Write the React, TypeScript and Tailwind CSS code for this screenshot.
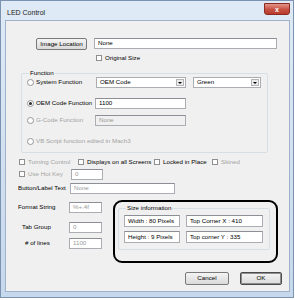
import React from 'react';

const Check = ({ label, disabled, className = '' }: { label: string; disabled?: boolean; className?: string }) => (
    <div className={`flex items-center ${className}`}>
        <span className="w-[6px] h-[6px] border border-[#8f8f8f] bg-white shrink-0" />
        <span className={`ml-[3px] whitespace-nowrap ${disabled ? 'text-[#a3a3a3]' : 'text-black'}`}>{label}</span>
    </div>
);

const Radio = ({ label, checked, disabled, width }: { label: string; checked?: boolean; disabled?: boolean; width?: string }) => (
    <div className={`flex items-center ${width ?? ''}`}>
        <span className="w-[7px] h-[7px] rounded-full border border-[#959595] bg-white flex items-center justify-center shrink-0">
            {checked && <span className="w-[3px] h-[3px] rounded-full bg-[#2b2b2b]" />}
        </span>
        <span className={`ml-[2px] whitespace-nowrap ${disabled ? 'text-[#a3a3a3]' : 'text-black'}`}>{label}</span>
    </div>
);

const Field = ({ value, className = '', muted, disabled }: { value: string; className?: string; muted?: boolean; disabled?: boolean }) => (
    <div
        className={`flex items-center pl-[3px] border border-[#abadb3] border-t-[#8c8f96] ${disabled ? 'bg-[#f0f0f0]' : 'bg-white'} ${muted || disabled ? 'text-[#9a9a9a]' : 'text-black'} ${className}`}
    >
        {value}
    </div>
);

const Combo = ({ value, className = '' }: { value: string; className?: string }) => (
    <div className={`flex items-center justify-between bg-white border border-[#abadb3] h-[11px] pl-[3px] pr-[1px] ${className}`}>
        <span>{value}</span>
        <span className="w-[8px] h-[7px] bg-[#ececec] border border-[#b5b5b5] flex items-center justify-center">
            <span className="w-0 h-0 border-l-[2px] border-r-[2px] border-t-[2px] border-l-transparent border-r-transparent border-t-black" />
        </span>
    </div>
);

const Btn = ({ label, className = '', focused }: { label: string; className?: string; focused?: boolean }) => (
    <div
        className={`flex items-center justify-center rounded-[2px] bg-gradient-to-b from-[#f4f4f4] to-[#dadada] ${focused ? 'border border-[#4b4b4b] ring-1 ring-inset ring-[#8d8d8d]' : 'border border-[#7a7a7a]'} ${className}`}
    >
        {label}
    </div>
);

export default function App() {
    return (
        <div className="w-[295px] h-[300px] bg-white font-['Liberation_Sans',Arial,sans-serif] text-[6.2px] leading-none text-black">
            <div className="w-[294px] h-[298px] border border-[#7b93b0] bg-gradient-to-b from-[#dfeaf6] to-[#c6d8ec] flex flex-col">
                {/* title bar */}
                <div className="h-[19px] flex items-start justify-between">
                    <span className="ml-[6px] mt-[8px] text-[7px] text-[#1a1a1a]">LED Control</span>
                    <div className="mt-[2px] mr-[3px] w-[26px] h-[12px] rounded-b-[3px] border border-[#8a2a22] bg-gradient-to-b from-[#e0958a] via-[#c95546] to-[#b83a2a] flex items-center justify-center">
                        <span className="text-white text-[7px] font-bold leading-none">x</span>
                    </div>
                </div>

                {/* client area */}
                <div className="ml-[4px] w-[285px] h-[272px] border border-[#9fb2c9] bg-[#f0f0f0] flex flex-col">
                    <div className="mt-[17px] ml-[30px] flex items-start">
                        <Btn label="Image Location" className="w-[51px] h-[12px]" />
                        <Field value="None" className="ml-[7px] w-[183px] h-[11px]" />
                    </div>
                    <Check label="Original Size" className="mt-[4px] ml-[90px] h-[8px]" />

                    <fieldset className="mt-[7px] ml-[15px] w-[247px] border border-[#d5dfe5] rounded-[2px] pl-[5px] pb-[7px]">
                        <legend className="ml-[2px] px-[1px] leading-[8px]">Function</legend>
                        <div className="flex items-center h-[11px]">
                            <Radio label="System Function" width="w-[69px]" />
                            <Combo value="OEM Code" className="w-[90px]" />
                            <Combo value="Green" className="ml-[7px] w-[68px]" />
                        </div>
                        <div className="mt-[10px] flex items-center h-[11px]">
                            <Radio label="OEM Code Function" checked width="w-[68px]" />
                            <Field value="1100" className="w-[91px] h-[11px]" />
                        </div>
                        <div className="mt-[6px] flex items-center h-[11px]">
                            <Radio label="G-Code Function" disabled width="w-[68px]" />
                            <Field value="None" disabled className="w-[91px] h-[11px]" />
                        </div>
                        <div className="mt-[11px] flex items-center h-[8px]">
                            <Radio label="VB Script function edited in Mach3" disabled />
                        </div>
                    </fieldset>

                    <div className="mt-[5px] ml-[13px] h-[8px] flex items-center">
                        <Check label="Turning Control" disabled className="w-[59px]" />
                        <Check label="Displays on all Screens" className="w-[76px]" />
                        <Check label="Locked in Place" className="w-[58px]" />
                        <Check label="Skined" disabled />
                    </div>
                    <div className="mt-[3px] ml-[13px] h-[11px] flex items-center">
                        <Check label="Use Hot Key" disabled className="w-[52px]" />
                        <Field value="0" muted className="w-[32px] h-[11px]" />
                    </div>
                    <div className="mt-[3px] ml-[12px] h-[11px] flex items-center">
                        <span className="w-[52px] whitespace-nowrap">Button/Label Text</span>
                        <Field value="None" muted className="w-[105px] h-[11px]" />
                    </div>

                    <div className="mt-[6px] ml-[12px] flex items-start">
                        <div className="flex flex-col">
                            <div className="mt-[2px] flex items-center h-[11px]">
                                <span className="w-[37px] text-center whitespace-nowrap">Format String</span>
                                <Field value="%+.4f" muted className="ml-[14px] w-[33px] h-[11px]" />
                            </div>
                            <div className="mt-[9px] flex items-center h-[11px]">
                                <span className="w-[37px] text-center whitespace-nowrap">Tab Group</span>
                                <Field value="0" muted className="ml-[14px] w-[33px] h-[11px]" />
                            </div>
                            <div className="mt-[5px] flex items-center h-[11px]">
                                <span className="w-[37px] text-center whitespace-nowrap">&nbsp;# of lines</span>
                                <Field value="1100" muted className="ml-[14px] w-[33px] h-[11px]" />
                            </div>
                        </div>

                        <div className="ml-[11px] w-[165px] h-[63px] border-2 border-black rounded-[9px]">
                            <fieldset className="mt-[2px] ml-[3px] w-[152px] border border-[#d5dfe5] rounded-[2px] pl-[5px] pb-[6px]">
                                <legend className="ml-[2px] px-[1px] leading-[8px]">Size information</legend>
                                <div className="mt-[3px] flex items-center">
                                    <Field value="Width : 80 Pixels" className="w-[56px] h-[12px]" />
                                    <Field value="Top Corner X : 410" className="ml-[6px] w-[77px] h-[12px]" />
                                </div>
                                <div className="mt-[4px] flex items-center">
                                    <Field value="Height : 9 Pixels" className="w-[56px] h-[12px]" />
                                    <Field value="Top corner Y : 335" className="ml-[6px] w-[77px] h-[12px]" />
                                </div>
                            </fieldset>
                        </div>
                    </div>

                    <div className="mt-[9px] pr-[7px] flex justify-end">
                        <Btn label="Cancel" className="w-[44px] h-[13px]" />
                        <Btn label="OK" focused className="ml-[11px] w-[42px] h-[13px]" />
                    </div>
                </div>
            </div>
        </div>
    );
}
